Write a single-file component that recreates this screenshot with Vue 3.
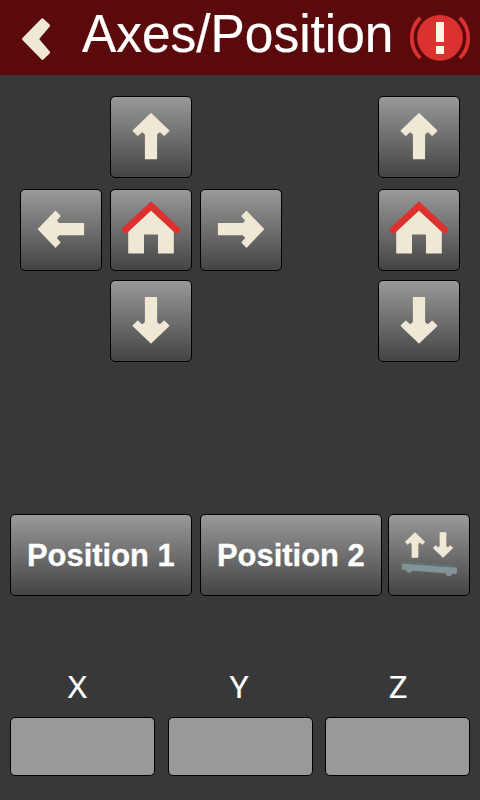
<script setup>
const ARROW = 'M41 17.6 L58.8 34.7 L54.2 39.2 L50.6 36 Q49.5 35.4 48.6 36.2 L46.5 38.2 V62.7 H35.5 V38.2 L33.4 36.2 Q32.5 35.4 31.4 36 L27.8 39.2 L23.2 34.7 Z'
const turns = { up: 0, right: 90, down: 180, left: 270 }
const xy = ['up', 'left', 'home', 'right', 'down']
const z = ['up', 'home', 'down']
const axes = ['X', 'Y', 'Z']
</script>

<template>
  <main class="screen">
    <header class="bar">
      <button class="back" aria-label="Back">
        <svg width="75" height="75" viewBox="0 0 75 75">
          <path class="cream chevron" d="M23.5 39 L42.4 19.8 L48.6 25.5 L37.2 39 L48.6 52.5 L42.4 58.3 Z" />
        </svg>
      </button>
      <h1><span>Axes/Position</span></h1>
      <button class="alert" aria-label="Stop">
        <svg width="70" height="75" viewBox="0 0 70 75">
          <circle class="red" cx="30" cy="37.8" r="22.9" />
          <path class="arc" d="M10.2 17.8 A28.2 28.2 0 0 0 10.2 58 M49.8 17.8 A28.2 28.2 0 0 1 49.8 58" />
          <path class="mark" d="M26 22 h8 v20 h-8 Z M26 46 h8 v8 h-8 Z" />
        </svg>
      </button>
    </header>

    <section class="pads">
      <div v-for="(pad, p) in [xy, z]" :key="p" :class="['pad', p ? 'pad-z' : 'pad-xy']">
        <button v-for="k in pad" :key="k" :class="['btn', 'key', k]" :aria-label="k">
          <svg width="82" height="82" viewBox="0 0 82 82">
            <template v-if="k === 'home'">
              <path class="cream" d="M41 20 L63.8 41 V64.4 H48 V45.5 H34 V64.4 H18.2 V41 Z" />
              <path class="roof" d="M15.2 41 L41 16.9 L66.8 41" />
            </template>
            <path v-else class="cream arrow" :d="ARROW" :transform="`rotate(${turns[k]} 41 40.2)`" />
          </svg>
        </button>
      </div>
    </section>

    <section class="positions">
      <button class="btn preset"><span>Position 1</span></button>
      <button class="btn preset"><span>Position 2</span></button>
      <button class="btn key bed" aria-label="Bed level">
        <svg width="82" height="82" viewBox="0 0 82 82">
          <path class="cream arrow" :d="ARROW" transform="translate(4.45 8.9) scale(.55)" />
          <path class="cream arrow" :d="ARROW" transform="translate(32.45 8.9) rotate(180 22.55 22.1) scale(.55)" />
          <path class="plate" d="M13.7 48 L69 52.2 V58.2 L68 60 L64.2 59.7 Q63.6 62.3 61 62.1 Q58 61.9 57.6 59.2 L24.3 56.7 Q23.7 59 21 58.8 Q18.2 58.4 17.8 56 L14.2 55.6 L13.7 54.4 Z" />
          <path class="edge" d="M13.7 48 L69 52.2 V53.8 L13.7 49.5 Z" />
        </svg>
      </button>
    </section>

    <section class="coords">
      <label v-for="a in axes" :key="a">
        <span :class="['axis', a.toLowerCase()]">{{ a }}</span>
        <input type="text" readonly :aria-label="a" />
      </label>
    </section>
  </main>
</template>

<style>
body { margin: 0; background: #383838; }
</style>

<style scoped>
.screen {
  box-sizing: border-box;
  width: 480px;
  height: 800px;
  overflow: hidden;
  background: #383838;
  color: #fff;
  font-family: "Liberation Sans", Arial, sans-serif;
}
button {
  padding: 0;
  border: 0;
  background: none;
  color: inherit;
  font-family: inherit;
}
svg { display: block; }
.bar {
  display: grid;
  grid-template-columns: 75px 335px 70px;
  height: 75px;
  background: #5a0a0a;
}
h1 {
  margin: 0;
  padding-left: 7px;
  font-size: 54px;
  font-weight: 400;
  line-height: 67px;
  white-space: nowrap;
  -webkit-text-stroke: 0.2px #fff;
}
h1 span {
  display: inline-block;
  transform: scaleX(.952);
  transform-origin: left;
}
.cream { fill: #eee8d5; }
.chevron { stroke: #eee8d5; stroke-width: 3; stroke-linejoin: round; }
.arrow { stroke: #eee8d5; stroke-width: 1.2; stroke-linejoin: round; }
.red { fill: #dc322f; }
.arc { fill: none; stroke: #dc322f; stroke-width: 3.8; }
.mark { fill: #fdf6e3; }
.roof { fill: none; stroke: #dc322f; stroke-width: 6.8; stroke-linecap: round; }
.plate { fill: #839496; }
.edge { fill: #586e75; }
.btn {
  box-sizing: border-box;
  height: 82px;
  border: 1px solid #000;
  border-radius: 5px;
  background: linear-gradient(#999, #444);
}
.key { width: 82px; }
.key svg { margin: -1px; }
.pads {
  display: flex;
  justify-content: space-between;
  height: 418px;
  padding: 21px 20px 0;
}
.pad {
  display: grid;
  align-content: start;
  grid-template-rows: 93px 91px 82px;
}
.pad-xy {
  grid-template-columns: repeat(3, 82px);
  column-gap: 8px;
  grid-template-areas: ". up ." "left home right" ". down .";
}
.pad-z {
  grid-template-columns: 82px;
  grid-template-areas: "up" "home" "down";
}
.up { grid-area: up; }
.left { grid-area: left; }
.home { grid-area: home; }
.right { grid-area: right; }
.down { grid-area: down; }
.positions {
  display: grid;
  grid-template-columns: 182px 182px 82px;
  column-gap: 8px;
  padding: 0 10px;
}
.bed { margin-left: -2px; }
.preset {
  font-size: 32px;
  font-weight: 700;
  line-height: 80px;
  white-space: nowrap;
  -webkit-text-stroke: 0.3px #fff;
}
.preset span {
  display: inline-block;
  transform: translateX(-0.6px) scaleX(.966);
}
.coords {
  display: flex;
  justify-content: space-between;
  padding: 71px 10px 0;
}
.coords label {
  display: flex;
  flex-direction: column;
  width: 145px;
}
.axis {
  height: 50px;
  font-family: "Noto Sans", sans-serif;
  font-size: 31px;
  line-height: 38px;
  text-align: center;
  transform: translateX(0.7px) scaleX(1.06);
  -webkit-text-stroke: 0.2px #fff;
}
.x { padding-right: 11px; }
.y { padding-right: 4px; }
.z { padding-right: 0; }
.coords input {
  box-sizing: border-box;
  width: 145px;
  height: 59px;
  margin: 0;
  border: 1px solid #000;
  border-radius: 5px;
  background: #999;
}
</style>
